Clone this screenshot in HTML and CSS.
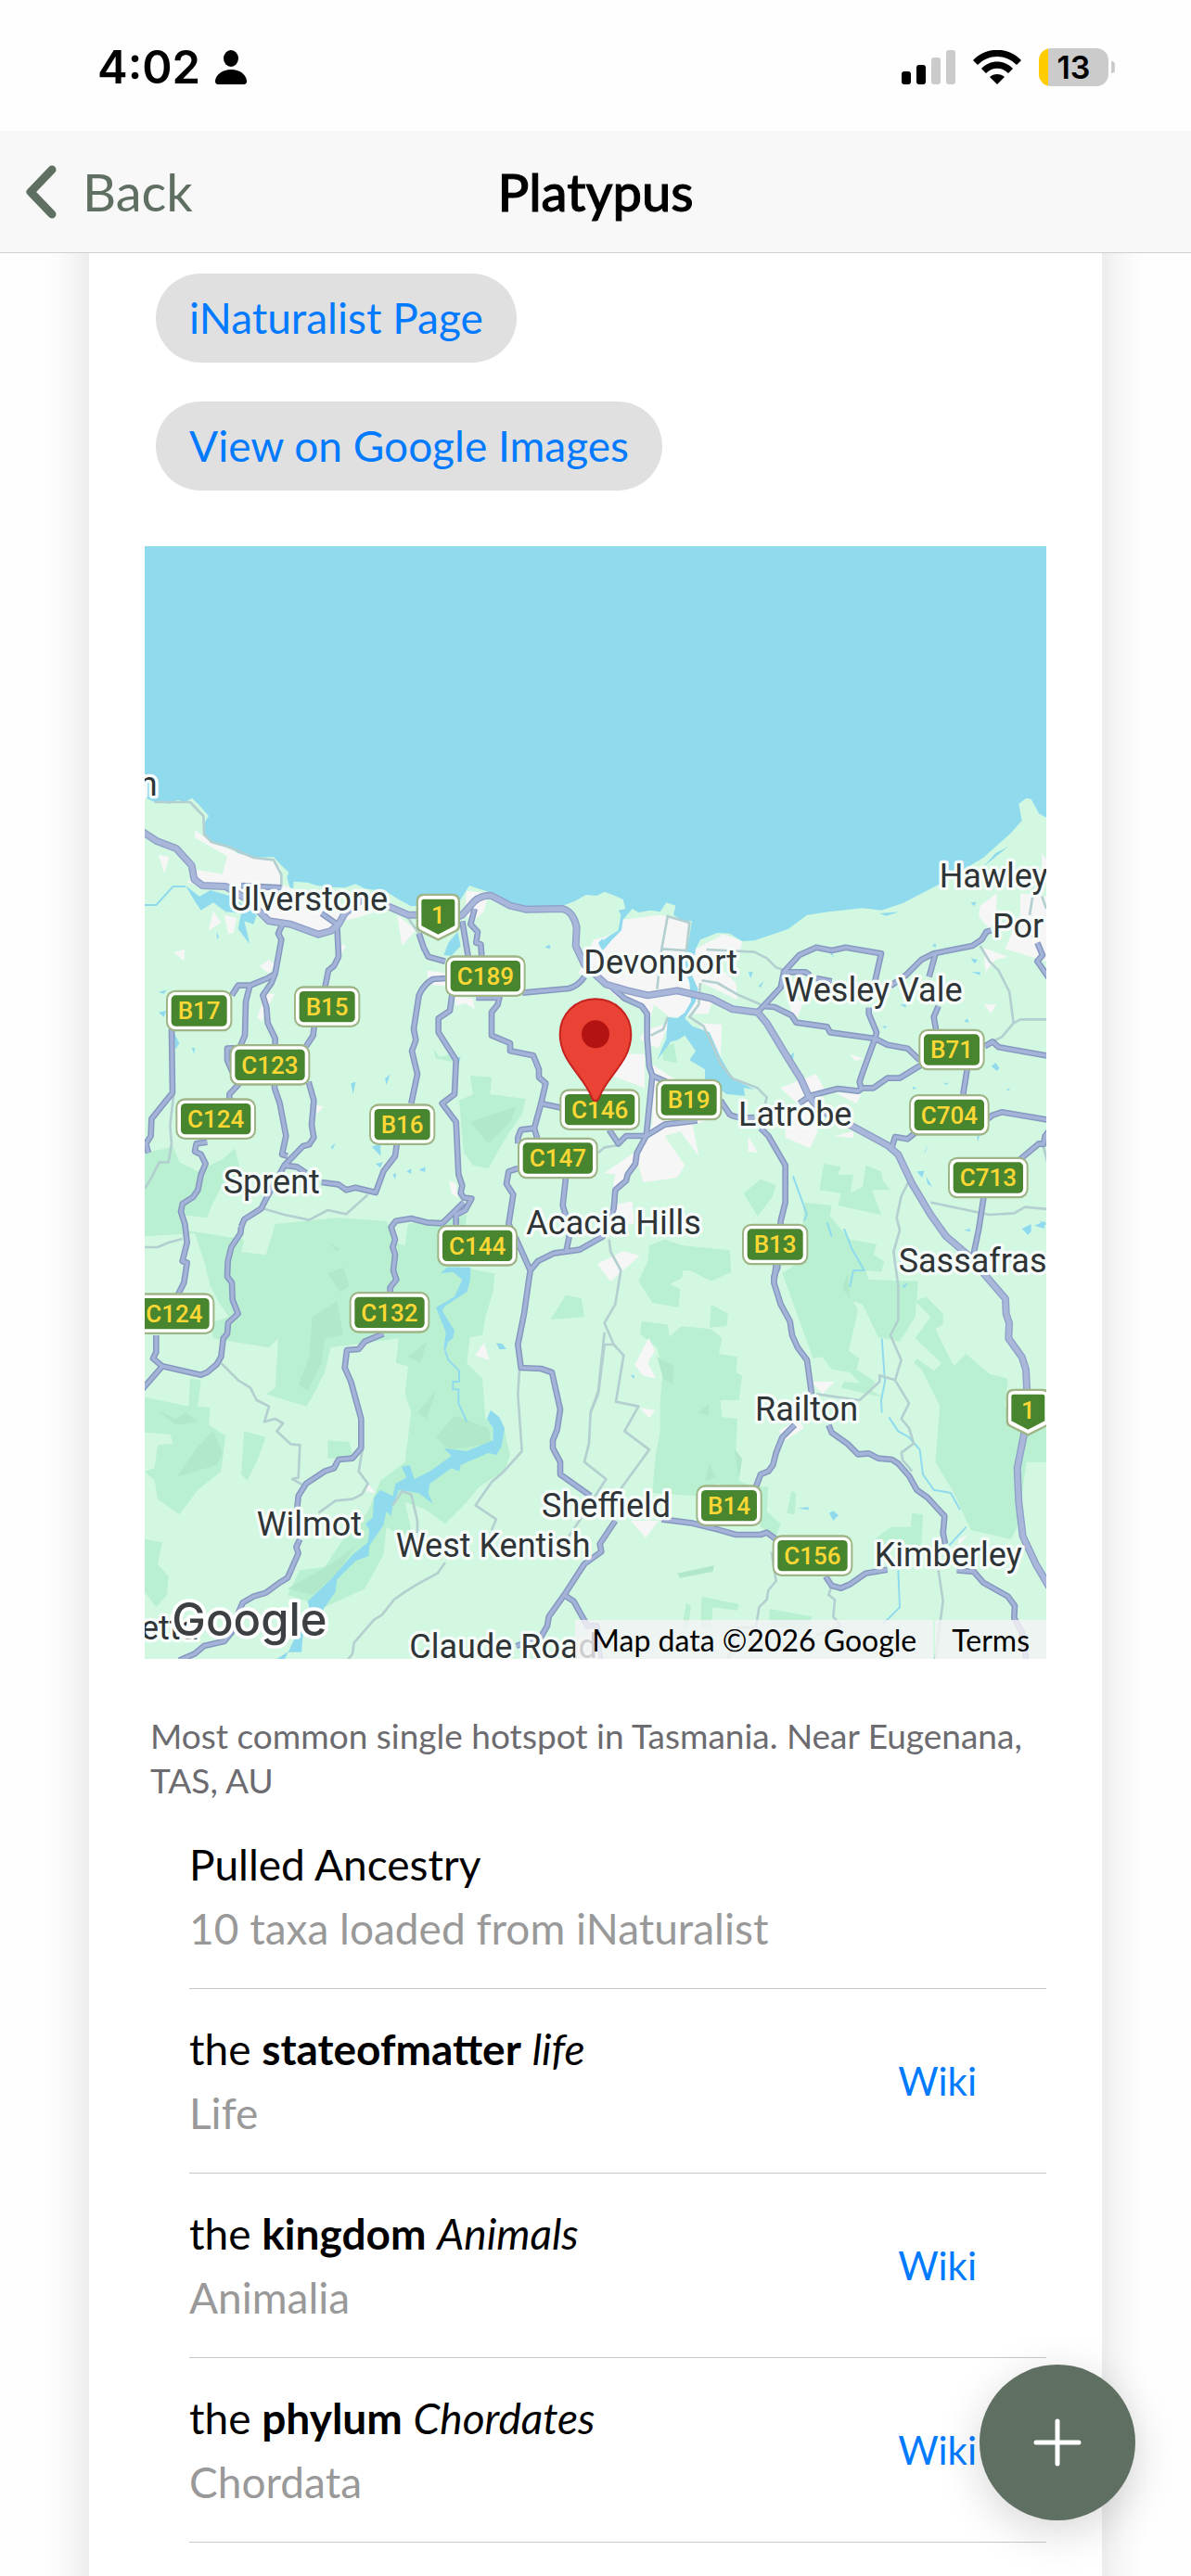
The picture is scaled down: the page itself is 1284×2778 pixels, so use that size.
FILE: index.html
```html
<!DOCTYPE html>
<html lang="en">
<head>
    <meta charset="UTF-8">
    <meta name="viewport" content="width=device-width, initial-scale=1.0">
    <title>Platypus</title>
    <link rel="stylesheet" href="styles.css">
</head>
<body>
    <div class="status-bar">
        <div class="status-left">
            <span class="status-time">4:02</span>
            <svg class="icon-person" viewBox="0 0 34 37" aria-hidden="true">
                <ellipse cx="17" cy="9" rx="8" ry="9"/>
                <path d="M4 37C1 37 0 36 0 33C1 26 8 21 17 21S33 26 34 33C34 36 33 37 30 37Z"/>
            </svg>
        </div>
        <div class="status-right">
            <svg class="icon-signal" viewBox="0 0 58 37" aria-hidden="true">
                <rect x="0" y="23" width="10" height="14" rx="3"/>
                <rect x="16" y="16" width="10" height="21" rx="3"/>
                <rect class="dim" x="32" y="8" width="10" height="29" rx="3"/>
                <rect class="dim" x="48" y="0" width="10" height="37" rx="3"/>
            </svg>
            <svg class="icon-wifi" viewBox="0 0 52 37" aria-hidden="true">
                <path d="M0 11C14-4 38-4 52 11L47 16C35 4 17 4 5 16Z"/>
                <path d="M9 20C18 10 34 10 43 20L38 25C31 18 21 18 14 25Z"/>
                <path d="M18 29C22 25 30 25 34 29L26 37Z"/>
            </svg>
            <div class="battery">
                <span class="battery-body">13</span>
                <span class="battery-tip"></span>
            </div>
        </div>
    </div>

    <header class="nav-bar">
        <button class="back-button" type="button">
            <svg class="icon-back" viewBox="0 0 34 58" aria-hidden="true"><path d="M29 5L6 29L29 53"/></svg>
            <span>Back</span>
        </button>
        <h1 class="nav-title">Platypus</h1>
    </header>

    <main class="page">
        <article class="card">
            <div class="links">
                <a class="pill" href="#inaturalist">iNaturalist Page</a>
                <a class="pill" href="#images">View on Google Images</a>
            </div>

            <div class="map">
                <svg class="map-canvas" viewBox="18 -693 2916 3600" role="img" aria-label="Map of Eugenana, Tasmania">
                    <defs>
                        <g id="highways">
                            <path d="M10 230L55 260L120 285L170 340L178 385L205 405L280 408L350 450L420 520L490 530L580 563L620 552L645 530L665 495L720 450L800 470L870 500H910L1000 520L1045 500L1085 455Q1110 435 1140 438L1200 470L1250 482L1370 480Q1405 490 1415 540L1412 600L1440 660L1510 725L1580 745L1645 760L1740 745L1850 770L1920 805L2000 815L2030 850L2090 950L2140 1030L2165 1085L2200 1130L2300 1180L2420 1245L2455 1275L2500 1370L2560 1470L2610 1540L2680 1600L2740 1670L2802 1742L2804 1790L2814 1820L2812 1870L2855 1930L2868 1970L2875 2110L2862 2180L2840 2290L2845 2400L2858 2510L2900 2600L2944 2675"/>
                        </g>
                        <g id="roads">
                            <path d="M468 520L450 560L460 580L440 690L415 705L360 728H320L300 760M440 690L428 720L400 760L412 800L416 850L440 900L438 1060L455 1110L475 1215L462 1275L480 1280M358 730L345 780L342 890L325 930L285 932V970L320 1050L292 1080V1110M330 405L460 412M590 495L640 530L645 635L630 665L612 680L600 740L565 870L563 890L540 925M548 1040L565 1100L558 1180L565 1220L550 1243L530 1248L470 1310L410 1420L395 1450L340 1485L330 1510M470 1310L510 1315L540 1335M590 1365L645 1372L670 1390L700 1382L765 1398L790 1330L828 1280L835 1230"/>
                            <path d="M880 1110L900 1015L882 940L895 905L888 870L905 760Q920 725 950 708L990 705M905 560L920 605L935 635L990 650M1045 520L1065 640M1085 480L1072 530L1095 555L1090 590L1105 595L1108 635M1012 760L1005 810L968 835V880L1025 970L1020 1080L980 1110L1025 1170L1033 1340L1045 1375L1040 1400L1050 1415L1075 1418L1055 1455L1025 1470V1510M1050 1430L980 1498L930 1495L880 1482L830 1490L815 1510L828 1550L820 1575L828 1600L822 1650L832 1680L812 1705V1725M1090 768H1165L1160 790L1140 815V890L1200 915V940L1275 955L1293 1000V1025L1315 1045L1300 1110L1370 1125M1300 1110L1278 1190L1235 1195L1225 1220V1240M1278 1190L1288 1225M1240 752L1390 738Q1420 730 1440 700"/>
                            <path d="M1225 1320L1195 1330L1188 1370L1210 1405L1195 1500L1220 1550L1265 1650L1245 1790L1225 1890L1235 1965L1300 1968L1335 1980L1362 2100L1352 2165L1338 2200V2225L1362 2270V2310L1460 2380M1380 1350L1370 1440L1395 1520L1382 1585M1265 1650L1290 1620L1340 1595L1425 1583L1500 1540L1535 1450L1540 1390L1575 1360L1580 1340L1605 1305L1610 1270L1640 1215L1660 1020L1650 990L1643 900V820L1625 795L1570 770L1530 735M105 870L108 1075L40 1160L38 1215L22 1240L30 1270M220 1235L185 1240L180 1265L200 1275L215 1305L200 1340L190 1390L175 1412L140 1435L135 1460L148 1500L155 1560L140 1620L155 1625L145 1690L125 1730M330 1510L328 1530L298 1575L287 1620L285 1670L300 1690L302 1745L320 1790L288 1820L285 1855L272 1870L265 1930L250 1955L220 1980L200 1988L75 1960L45 1935L55 1915V1860M75 1960L10 2035"/>
                            <path d="M790 1855L730 1880L710 1905L672 1908L665 1965L685 2010L718 2130V2225L690 2258L645 2262L630 2290L600 2300L540 2340L515 2380L510 2430M520 2520L508 2545L515 2565L480 2645L455 2660L410 2693L370 2705L335 2725L320 2760L300 2820L275 2850L210 2865L180 2890L130 2912M1540 2460L1490 2535L1495 2560L1440 2600L1375 2700L1325 2770L1320 2800L1300 2835L1220 2865M1375 2700L1405 2720L1450 2800H1480L1490 2910"/>
                            <path transform="translate(1470 0)" d="M190 1020L235 1040M410 1100L440 1145Q460 1160 520 1155M170 1215H105L80 1240L50 1195M170 1215L230 1178L335 1165M530 815L605 735L615 685L665 630L720 605L770 615L815 605L930 625L910 715M615 685H685L700 695M720 705L770 715M545 795L585 798L640 825L655 848L755 862L765 880L910 900L950 920L1015 932L1055 970M890 800V820L915 880L910 900L870 1010L860 1040L865 1060M700 1085L790 1062L855 1070L870 1060L905 1060L950 1028H990L1060 985M960 730L1010 695L1060 645L1100 625L1225 600L1255 580L1270 555L1285 550M1105 628L1085 700M1115 795L1100 830L1108 875M1265 925L1290 910L1310 928L1480 958M1208 1000L1195 1080M1275 1160L1290 1148L1320 1138L1480 1165M965 1250L975 1218L1015 1225L1040 1205M1380 1290L1440 1240L1455 1242L1460 1215L1480 1190M1262 1410L1245 1520L1228 1600M540 1190L565 1215L620 1310V1430L605 1490L595 1640L583 1670V1690M1435 590L1452 630L1435 650L1480 715M700 1085L665 1110"/>
                            <path transform="translate(1470 1470)" d="M590 160L583 220L605 290L635 345L642 390L660 430L690 470L705 580M650 680L610 720L590 770L580 810L565 830L540 840L525 880M760 680L770 705L820 740L855 775L890 772L920 788L965 792L985 805L1020 845L1045 890L1080 915L1135 975L1130 1030L1137 1065M1175 1150L1230 1155L1260 1190L1340 1235L1362 1265L1360 1305L1385 1350L1400 1445M220 985L320 998L400 1018L460 1035H540L560 1028L590 1050M750 1170L770 1200L800 1208L830 1195L880 1160L950 1148"/>
                        </g>
                        <g id="route-c">
                            <rect class="route-edge" x="-130" y="-67" width="260" height="134" rx="30"/>
                            <rect class="route-rim" x="-124" y="-60" width="248" height="120" rx="24"/>
                            <rect class="route-plate" x="-113" y="-50" width="226" height="100" rx="14"/>
                        </g>
                        <g id="route-b">
                            <rect class="route-edge" x="-107" y="-67" width="214" height="134" rx="30"/>
                            <rect class="route-rim" x="-101" y="-60" width="202" height="120" rx="24"/>
                            <rect class="route-plate" x="-90" y="-50" width="180" height="100" rx="14"/>
                        </g>
                        <g id="route-1">
                            <path class="route-edge" d="M-46-74H46Q71-74 71-50V34Q71 42 60 49L0 79L-60 49Q-71 42-71 34V-50Q-71-74-46-74Z"/>
                            <path class="route-rim" d="M-44-67H44Q64-67 64-48V30Q64 38 56 43L0 71L-56 43Q-64 38-64 30V-48Q-64-67-44-67Z"/>
                            <path class="route-plate" d="M-47-56H47Q54-56 54-48V30L0 58L-54 30V-48Q-54-56-47-56Z"/>
                        </g>
                    </defs>

                    <rect class="land" x="18" y="-693" width="2916" height="3600"/>

                    <!-- forest -->
                    <g class="forest">
                        <path d="M18 1270L110 1250L130 1300L190 1330L270 1290L310 1255L330 1340L270 1370L235 1440L220 1480L130 1470L18 1500Z"/>
                        <path d="M18 1470L130 1470L150 1520L340 1550L330 1590L410 1600L440 1500L640 1480L800 1490L830 1560L860 1570L870 1500L1060 1470L1040 1640L1150 1660L1145 1720L1120 1800L1110 1860L1070 1865L1060 1950L1110 2000L1120 2130L1180 2160L1200 2250L1180 2300L1100 2350L1060 2400L990 2470L920 2420L860 2400L880 2490L850 2510L800 2480L790 2570L730 2680L600 2740L480 2700L520 2620L600 2610L660 2520L740 2430L780 2330L860 2270L880 2110L860 2050L870 1960L830 1950L840 1870L620 1900L600 1980L560 2060L540 2090L410 2050L440 2030L450 1870L420 1900L240 1870L230 1820L290 1800L255 1750L230 1700L210 1620L180 1530L18 1540Z"/>
                        <path d="M18 2060L160 2090L165 2000L200 2005L190 2090L230 2095L225 2150L280 2185L265 2300L190 2360L130 2440L60 2390L50 2330L18 2300L50 2290L60 2215L110 2210L100 2180L18 2175ZM340 2170L410 2190L380 2270L350 2330L330 2310L335 2240ZM610 2200L680 2205L690 2250L610 2260Z"/>
                        <path d="M18 2520L75 2530L60 2600L95 2640L90 2700L55 2740L18 2690ZM1070 1020L1140 1025L1135 1080L1250 1095L1240 1140L1180 1230L1130 1320L1080 1310L1050 1270L1035 1100L1080 1080ZM1380 1730L1430 1740L1440 1800L1330 1810ZM950 930L970 960L1010 950L1015 975L960 965Z"/>
                        <path transform="translate(1470 0)" d="M220 930L260 915L270 980L225 970ZM745 1305L800 1315L790 1340L840 1340L830 1400L870 1380L880 1310L930 1330L935 1360L960 1390L900 1390L930 1470L790 1440L800 1400L730 1390ZM485 1400L540 1355L590 1375L580 1410L530 1475ZM680 1430L770 1440L760 1500L680 1490Z"/>
                        <path transform="translate(1470 1470)" d="M180 100L230 80L290 100L440 115L445 185L380 215L310 180L290 180L285 205L245 225L280 240L275 300L190 285L145 215L175 150ZM380 290L435 320L430 360L375 365ZM155 345L240 355L245 395L285 360L380 370L415 400L405 450L465 460L460 510L480 520L470 600L410 600L415 655L465 660L460 760L480 790L470 860L520 880L565 880L560 960L605 1000L590 1040L540 1010L520 900L400 870L330 910L190 900L200 780L215 700L215 600L225 500L205 430L150 385Z"/>
                        <path transform="translate(1470 1470)" d="M680 -20L760 0L830 80L915 95L905 130L940 150L930 185L880 180L890 210L1050 215L1040 330L990 410L920 395L870 290L840 280L855 310L825 440L860 465L850 500L910 540L900 570L935 590L800 560L810 540L860 545L830 510L770 500L740 460L710 465L610 190L670 150ZM1040 280L1075 265L1130 320V355L1105 370L1165 490L1205 450L1280 515L1340 530L1330 620L1464 690V800L1400 800L1370 1010L1350 1050L1220 1020L1160 890L1105 800L1120 620L1060 500L1035 480L1045 465L1100 505L1125 480L1040 400L1090 330ZM640 895L655 900L650 970L625 965ZM910 1050L960 1010L1025 1010L1030 965L1065 970L1060 1070L920 1080ZM350 1235L470 1260L465 1280L385 1270L380 1340L345 1335ZM300 1255L315 1265L305 1340L285 1340ZM570 1275L705 1300L690 1350L565 1330Z"/>
                    </g>
                    <g class="forest-dark">
                        <path d="M560 1800L640 1750L660 1860L600 1870L590 1950L545 2040L515 2020L550 1930ZM615 1560L650 1580L640 1590ZM870 1930L930 1880L910 1950ZM960 2190L1020 2120L1130 2160L1140 2210L1000 2230ZM120 2320L190 2220L240 2170L270 2240L250 2280L180 2300ZM55 2100L120 2130L150 2110L190 2140L120 2150ZM480 2680L620 2600L700 2540L640 2630L560 2700ZM1070 1170L1220 1120L1200 1170L1130 1240ZM900 2110L960 2040L930 2130ZM610 1660L660 1640L680 1700L650 1720Z"/>
                        <path transform="translate(1470 1470)" d="M205 460L260 490L255 550L225 530ZM340 640L375 610L370 650ZM360 860L375 805L395 850ZM455 760L480 790L470 850ZM270 1160L390 1135L385 1155L280 1175ZM820 190L830 270L805 240Z"/>
                    </g>

                    <!-- built-up areas -->
                    <g class="urban">
                        <path d="M180 225L230 262L320 300L370 315L435 318L458 350L460 400L495 415L640 470L760 440L830 470L700 510L640 525L600 555L480 530L400 510L290 420L155 395L190 355L270 368L285 310L180 250ZM62 305L98 312L82 365ZM240 488L265 525L225 550ZM275 500L315 510L305 560H288ZM112 620L148 612L145 650ZM390 665L420 645L440 660L420 690ZM835 500L895 550L850 600ZM1058 422L1130 430L1115 490L1080 520L1055 500ZM932 680L1010 690L990 730L935 725ZM1020 765L1080 770L1085 805L1055 785L1025 795ZM655 595L670 600L655 625ZM410 755L440 755L420 790L395 845L382 830ZM1002 1360L1025 1370L1030 1415L1010 1400ZM570 1115L597 1120L575 1145ZM1115 1885L1133 1940L1087 1925ZM740 2340L765 2370L735 2365Z"/>
                        <path transform="translate(1470 0)" d="M-50 690L0 580L80 560L95 515L215 500L240 505L310 525L300 600L330 610L420 562L480 585L470 640L380 640L460 720L465 775L350 720L345 790L300 830L245 830L195 790L175 870L245 850L210 930L175 920L150 900L170 870V800L80 770L0 700ZM345 770L385 780L370 820L320 820ZM340 850L415 855L410 960L360 890ZM80 950L165 950V1060L60 1020ZM0 870L50 780L80 840L60 920L20 960ZM190 985L260 1030L300 1050L410 1150L320 1180L340 1280L280 1200L230 1215L295 1310L270 1350L160 1365L145 1310L60 1400L70 1340L35 1335L130 1270L190 1180ZM603 1060L720 1015L750 1070L690 1120L725 1200L700 1255L620 1220V1170L660 1110ZM1250 470L1305 430L1300 520L1280 545L1245 505ZM1380 430L1464 440V650L1330 610L1380 500ZM1450 300L1464 320V350L1450 340ZM1260 605L1340 635L1300 645L1268 685ZM1262 790H1302L1285 820ZM630 770L680 780L660 830L640 815ZM830 950L875 965L845 972ZM500 1215L530 1270L500 1265ZM780 1075L865 1080L850 1110ZM780 1215L840 1200V1222ZM60 1440L125 1425L130 1500H70Z"/>
                        <path transform="translate(1470 1470)" d="M12 160L95 118L150 132L55 215ZM178 398L198 440L175 480L202 530L158 520L133 485ZM705 540L780 540L740 580ZM150 625L198 632L180 658ZM600 700L660 660L680 690L620 730ZM120 990L210 990L168 1045ZM1180 1050L1210 1035L1180 1070ZM110 0L130 -10V30Z"/>
                    </g>

                    <!-- sea, rivers and lakes -->
                    <g class="water">
                        <path d="M18 120L50 135L100 140L125 128L150 135L170 122L190 140L225 180L212 200L210 240L235 262L290 278L320 300L370 315L435 312L460 340L484 362L478 380L488 412L498 415L500 392L545 395L575 405L620 410L665 412L700 400L730 415L800 425L840 450L880 472L905 470L1040 450L1068 405L1130 425L1160 435L1200 460L1250 475L1370 470L1410 455L1445 435L1480 438L1505 425L1545 440L1565 450L1573 480L1550 485L1558 500L1550 550L1510 575L1490 590L1500 615L1530 580L1560 550L1565 515L1595 480L1615 492L1655 485L1685 490L1705 460L1735 470L1728 500L1760 520H1788L1775 600L1765 620L1770 690L1780 720L1785 780L1765 815L1740 835L1710 830L1705 900L1675 970L1720 910L1740 905L1765 890L1800 940L1780 970L1830 1000V1030L1900 1080L1960 1085L1955 1060L1990 1065L1920 1030L1880 960L1845 880L1790 860L1765 835L1800 780L1808 740L1790 700L1800 610L1805 600L1815 580L1870 558L1910 560L1950 585L1990 583L2100 545L2160 500L2230 490L2340 478L2400 485L2470 462L2580 405L2680 345L2730 315L2820 235L2855 195L2845 140L2870 122L2885 125L2910 172L2934 185V-693H18Z"/>
                        <path d="M150 405L195 440L230 420L300 440L380 500L370 530L340 520L350 560L358 595L320 545L330 495L280 490L240 460L200 485L180 455ZM985 630L1000 590L1030 555L1040 600L1010 632ZM1485 590L1500 575V620ZM63 750L90 742L80 755ZM63 815L88 810L80 830ZM250 555L258 570L252 580ZM112 880L130 915L118 935ZM170 930L180 930L178 950ZM1028 960L1040 960L1032 990ZM685 1045L700 1040L692 1080ZM795 1030L812 1015L800 1050ZM752 1250L780 1240L782 1280ZM765 1305L788 1300L780 1318ZM865 1330L880 1320V1338ZM905 1325L925 1315V1332ZM820 1340L832 1335L828 1355ZM1312 605L1328 595L1330 610ZM620 1250L635 1238L625 1260ZM1155 1885L1175 1888L1188 1905L1165 1905Z"/>
                        <path d="M975 1660L995 1640H1072L1070 1685L1060 1720L990 1765L980 1780L1020 1845L1015 1870L1000 1880L990 1910L985 1905L992 1850L960 1770L1020 1735L1045 1680L1015 1655ZM1125 2130L1137 2102L1165 2125L1182 2160L1172 2220L1155 2248L1130 2240L1040 2280L1035 2300L1010 2290L940 2340L935 2370L950 2405L930 2390L905 2370L840 2360L820 2410L815 2445L800 2430L790 2475L745 2540L742 2575L700 2590L640 2650L635 2690L600 2740L575 2780L530 2830L525 2885L480 2885L440 2910H470L550 2740L545 2720L620 2650L690 2570L740 2530L745 2490L732 2470L755 2450L760 2385L780 2360L820 2380L830 2340L865 2320L848 2285L875 2280L890 2325L940 2300L1010 2250L985 2225L1060 2235L1145 2200L1145 2160Z"/>
                        <path transform="translate(1470 0)" d="M1260 345L1300 300L1340 280L1290 320ZM925 495L990 490L945 503ZM500 685L515 685L508 705ZM533 730L550 715L540 735ZM770 620L778 640L765 625ZM1220 460L1238 458L1230 472ZM1095 600L1105 590L1108 605ZM1220 640L1242 645L1232 658ZM1222 685L1250 685V695ZM990 790L1010 790V800ZM1198 845L1208 835L1215 848ZM935 858L950 862L940 868ZM635 955L648 945L645 970ZM1286 990L1300 978L1312 995L1305 1005ZM1130 1043H1148L1140 1050ZM1335 1065L1348 1060L1340 1070ZM1045 1330L1070 1328L1062 1350ZM1075 1345L1095 1380L1080 1370ZM1240 1215H1248L1242 1235ZM1068 1270L1085 1240L1072 1268ZM1030 1055L1045 1060L1035 1065ZM1440 1490L1462 1495V1505Z"/>
                        <path transform="translate(1470 1470)" d="M762 965L775 958L792 972L775 990ZM660 950L695 945V955ZM1385 45L1415 30V55L1405 65ZM1425 35L1458 22V45ZM1198 50L1215 45L1220 55ZM998 230L1018 220L1005 238ZM120 520L132 518L130 530Z"/>
                    </g>
                    <g class="creek">
                        <path d="M18 468H55L110 408H150M990 1910L1000 1940L1035 1975V2010H1015V2035H1033V2080L1060 2140"/>
                        <path transform="translate(1470 1470)" d="M645 -125L690 0L680 20M755 25L770 70M810 45L835 110L875 180H840L828 235M932 400L942 540L930 600L932 640M955 655L985 700L1020 720L1055 760L1065 840L1100 890L1155 900L1185 955M1205 1010L1150 1070M985 1150L990 1270L935 1325"/>
                    </g>

                    <g class="minor-roads">
                        <path d="M50 135L165 135L208 180L210 240L235 265L290 280L370 315L435 322L460 370V410M112 1080L100 1180L105 1240L95 1300L65 1300L40 1350L18 1385M400 1450L470 1470L550 1487L610 1455L670 1468L740 1405M18 1575H60L95 1560L140 1548M870 510L905 560"/>
                        <path d="M265 1950L320 2005L360 2030L380 2070L420 2090L405 2140L440 2130L465 2145L445 2170L490 2212L520 2215L515 2320L495 2325L540 2350M722 2230L710 2300L740 2340L720 2375L690 2390L635 2395L580 2435M1230 1970L1225 2050L1238 2235L1180 2300L1140 2335L1088 2410L1155 2455L1140 2490M990 2595L965 2630L900 2665L860 2690L825 2715L785 2765L760 2780L695 2855L690 2890L675 2910M820 2410L850 2365L880 2375L900 2460V2500M1505 1850L1485 2040L1460 2110L1455 2210L1440 2270L1510 2325L1430 2450L1390 2510"/>
                        <path transform="translate(1470 0)" d="M365 612L520 620L560 640L590 670L620 680M350 712L400 720L470 760L540 790M240 500L220 610L300 615L310 525L240 505M220 610L205 740M345 720L340 790L310 830L355 860L380 910L410 980L450 1030L530 1060L560 1090L555 1110M240 830L225 870L185 890M1250 600L1280 650L1310 680L1345 750L1358 850L1320 895L1280 915M1358 850L1380 838H1470M1020 1360L995 1410L980 1480L990 1520L970 1590L985 1700V1810L960 1860L995 1940L975 2005L925 1990V2010L860 2070L720 2050M975 2005L1020 2080L995 2130L1020 2160L1035 2210L995 2240L1000 2265L1030 2300M1090 1430L1280 1470L1360 1465L1395 1445L1470 1452M15 1270L35 1252L80 1245M1420 440L1410 500M1450 440L1464 480M1455 1250L1470 1310"/>
                        <path transform="translate(1470 1470)" d="M50 80L55 120L88 180L70 290L35 350L65 420L97 455L72 605L145 620L100 700L180 760L85 890M65 420H35L15 580L-10 640M575 1090L590 1185L565 1215L560 1245L535 1270L525 1335H465L435 1437M770 1200L760 1230L780 1245L775 1300L800 1330L720 1360M1115 1150L1130 1250L1105 1437"/>
                    </g>

                    <use href="#roads" class="road-casing"/>
                    <use href="#highways" class="highway-casing"/>
                    <use href="#roads" class="road-fill"/>
                    <use href="#highways" class="highway-fill"/>

                    <g class="places">
                        <text x="59" y="115" text-anchor="end">n</text>
                        <text x="294" y="487">Ulverstone</text>
                        <text x="1438" y="690">Devonport</text>
                        <text x="272" y="1402">Sprent</text>
                        <text x="2086" y="780">Wesley Vale</text>
                        <text x="2588" y="410">Hawley</text>
                        <text x="2760" y="572">Por</text>
                        <text x="1938" y="1182">Latrobe</text>
                        <text x="1252" y="1532">Acacia Hills</text>
                        <text x="2456" y="1655">Sassafras</text>
                        <text x="1992" y="2135">Railton</text>
                        <text x="1302" y="2448">Sheffield</text>
                        <text x="2378" y="2608">Kimberley</text>
                        <text x="380" y="2508">Wilmot</text>
                        <text x="830" y="2578">West Kentish</text>
                        <text x="874" y="2905">Claude Road</text>
                        <text x="6" y="2845">etta</text>
                    </g>

                    <g class="routes">
                        <g transform="translate(194 810)"><use href="#route-b"/><text y="28">B17</text></g>
                        <g transform="translate(608 797)"><use href="#route-b"/><text y="28">B15</text></g>
                        <g transform="translate(851 1178)"><use href="#route-b"/><text y="28">B16</text></g>
                        <g transform="translate(1778 1098)"><use href="#route-b"/><text y="28">B19</text></g>
                        <g transform="translate(2628 936)"><use href="#route-b"/><text y="28">B71</text></g>
                        <g transform="translate(2057 1566)"><use href="#route-b"/><text y="28">B13</text></g>
                        <g transform="translate(1908 2411)"><use href="#route-b"/><text y="28">B14</text></g>
                        <g transform="translate(1120 698)"><use href="#route-c"/><text y="28">C189</text></g>
                        <g transform="translate(423 985)"><use href="#route-c"/><text y="28">C123</text></g>
                        <g transform="translate(248 1160)"><use href="#route-c"/><text y="28">C124</text></g>
                        <g transform="translate(1490 1130)"><use href="#route-c"/><text y="28">C146</text></g>
                        <g transform="translate(1354 1287)"><use href="#route-c"/><text y="28">C147</text></g>
                        <g transform="translate(2620 1147)"><use href="#route-c"/><text y="28">C704</text></g>
                        <g transform="translate(2746 1350)"><use href="#route-c"/><text y="28">C713</text></g>
                        <g transform="translate(1094 1570)"><use href="#route-c"/><text y="28">C144</text></g>
                        <g transform="translate(114 1790)"><use href="#route-c"/><text y="28">C124</text></g>
                        <g transform="translate(810 1786)"><use href="#route-c"/><text y="28">C132</text></g>
                        <g transform="translate(2178 2573)"><use href="#route-c"/><text y="28">C156</text></g>
                        <g transform="translate(967 505)"><use href="#route-1"/><text y="22">1</text></g>
                        <g transform="translate(2875 2107)"><use href="#route-1"/><text y="22">1</text></g>
                    </g>

                    <g class="pin">
                        <path d="M1476 772C1411 772 1361 822 1361 886C1361 975 1438 1020 1464 1090Q1468 1102 1476 1102T1488 1090C1514 1020 1591 975 1591 886C1591 822 1541 772 1476 772Z"/>
                        <circle cx="1476" cy="886" r="45"/>
                    </g>

                    <text class="map-logo" x="106" y="2832">Google</text>
                </svg>
                <div class="map-credits">
                    <span class="credit">Map data ©2026 Google</span>
                    <a class="credit" href="#terms">Terms</a>
                </div>
            </div>

            <p class="caption">Most common single hotspot in Tasmania. Near Eugenana, TAS, AU</p>

            <ul class="taxa">
                <li class="taxon">
                    <div class="taxon-text">
                        <div class="taxon-name">Pulled Ancestry</div>
                        <div class="taxon-latin">10 taxa loaded from iNaturalist</div>
                    </div>
                </li>
                <li class="taxon">
                    <div class="taxon-text">
                        <div class="taxon-name">the <b>stateofmatter</b> <i>life</i></div>
                        <div class="taxon-latin">Life</div>
                    </div>
                    <a class="wiki" href="#life">Wiki</a>
                </li>
                <li class="taxon">
                    <div class="taxon-text">
                        <div class="taxon-name">the <b>kingdom</b> <i>Animals</i></div>
                        <div class="taxon-latin">Animalia</div>
                    </div>
                    <a class="wiki" href="#animalia">Wiki</a>
                </li>
                <li class="taxon">
                    <div class="taxon-text">
                        <div class="taxon-name">the <b>phylum</b> <i>Chordates</i></div>
                        <div class="taxon-latin">Chordata</div>
                    </div>
                    <a class="wiki" href="#chordata">Wiki</a>
                </li>
            </ul>
        </article>
    </main>

    <button class="fab" type="button" aria-label="Add">
        <svg class="icon-plus" viewBox="0 0 52 52" aria-hidden="true"><path d="M26 3V49M3 26H49"/></svg>
    </button>
</body>
</html>
```

FILE: styles.css
```css
* {
    box-sizing: border-box;
}

body {
    margin: 0;
    min-height: 100vh;
    display: flex;
    flex-direction: column;
    background: #fefefe;
    color: #000;
    font-family: Lato, sans-serif;
    font-size: 46px;
}

button {
    font-family: inherit;
    border: none;
    padding: 0;
    cursor: pointer;
}

a {
    color: #007aff;
    text-decoration: none;
}

/* Status bar */
.status-bar {
    height: 141px;
    padding: 0 82px 0 105px;
    display: flex;
    align-items: center;
    justify-content: space-between;
    font-family: Inter, sans-serif;
    font-weight: 600;
}

.status-left,
.status-right,
.battery {
    display: flex;
    align-items: center;
}

.status-left {
    gap: 16px;
    padding-top: 4px;
}

.status-right {
    gap: 19px;
    padding-top: 4px;
}

.status-time {
    font-size: 49px;
    line-height: 60px;
}

.icon-person {
    width: 34px;
    height: 37px;
}

.icon-signal {
    width: 58px;
    height: 37px;
}

.icon-signal .dim {
    fill: #cbcbcb;
}

.icon-wifi {
    width: 52px;
    height: 37px;
}

.battery {
    gap: 3px;
}

.battery-body {
    width: 75px;
    height: 41px;
    border-radius: 13px;
    background: linear-gradient(to right, #ffcc00 10px, #cbcbcb 10px);
    font-size: 34px;
    line-height: 41px;
    text-align: center;
}

.battery-tip {
    width: 4px;
    height: 13px;
    border-radius: 0 4px 4px 0;
    background: #cbcbcb;
}

/* Navigation bar */
.nav-bar {
    position: relative;
    z-index: 1;
    height: 132px;
    display: grid;
    grid-template-columns: 1fr auto 1fr;
    align-items: center;
    padding: 0 27px;
    background: #f8f8f8;
    border-bottom: 1px solid #cfcfcf;
}

.back-button {
    display: flex;
    align-items: center;
    gap: 28px;
    justify-self: start;
    background: none;
    color: #5f6f61;
    font-size: 56px;
    line-height: 64px;
}

.icon-back {
    width: 34px;
    height: 58px;
    fill: none;
    stroke: #5f6f61;
    stroke-width: 9;
    stroke-linecap: round;
    stroke-linejoin: round;
}

.nav-title {
    margin: 0;
    font-size: 56px;
    font-weight: 500;
    line-height: 64px;
    -webkit-text-stroke: 1px #000;
}

/* Card */
.page {
    flex: 1;
    display: flex;
    overflow: hidden;
}

.card {
    flex: 1;
    min-width: 0;
    margin: -60px 96px;
    padding: 82px 60px 60px;
    background: #fff;
    box-shadow: 0 0 48px rgba(0, 0, 0, 0.14);
}

.links {
    display: flex;
    flex-direction: column;
    align-items: flex-start;
    gap: 42px;
    margin: 0 12px 60px;
}

.pill {
    padding: 20px 36px;
    border-radius: 48px;
    background: #e0e0e0;
    line-height: 56px;
}

/* Map */
.map {
    position: relative;
    overflow: hidden;
}

.map-canvas {
    display: block;
    width: 100%;
    height: auto;
    font-family: Roboto, sans-serif;
}

.land { fill: #d3f8e2; }
.forest { fill: #b9f0d1; }
.forest-dark { fill: #b1e8c9; }
.urban { fill: #f6f6f6; }
.water { fill: #90daee; }

.creek,
.minor-roads,
.road-casing,
.road-fill,
.highway-casing,
.highway-fill {
    fill: none;
    stroke-linejoin: round;
}

.creek {
    stroke: #90daee;
    stroke-width: 6;
}

.minor-roads {
    stroke: #b3cfcf;
    stroke-width: 8;
}

.road-casing {
    stroke: #8798c0;
    stroke-width: 20;
}

.road-fill {
    stroke: #a3b4d8;
    stroke-width: 11;
}

.highway-casing {
    stroke: #8f9fc7;
    stroke-width: 24;
}

.highway-fill {
    stroke: #a8b7da;
    stroke-width: 16;
}

.places text {
    fill: #2f3437;
    stroke: #f6fcf9;
    stroke-width: 20;
    stroke-linejoin: round;
    paint-order: stroke;
    font-size: 108px;
}

.routes text {
    fill: #fdd835;
    font-size: 78px;
    font-weight: 500;
    text-anchor: middle;
}

.route-edge { fill: #9fb587; }
.route-rim { fill: #fff; }
.route-plate { fill: #47862f; }

.pin path {
    fill: #ea4335;
    stroke: #c5221f;
    stroke-width: 6;
}

.pin circle {
    fill: #b31412;
}

.map-logo {
    fill: #3c4043;
    stroke: #fff;
    stroke-width: 22;
    stroke-linejoin: round;
    paint-order: stroke;
    font-family: Inter, sans-serif;
    font-size: 147px;
    font-weight: 500;
}

.map-credits {
    position: absolute;
    right: 0;
    bottom: 0;
    display: flex;
    gap: 2px;
}

.credit {
    padding: 2px 18px 0;
    background: rgba(245, 242, 245, 0.8);
    color: #000;
    font-size: 32px;
    line-height: 40px;
}

/* Caption and ancestry list */
.caption {
    margin: 59px 6px 2px;
    color: #6b6b70;
    font-size: 37px;
    line-height: 48px;
}

.taxa {
    margin: 0 0 0 48px;
    padding: 0;
    list-style: none;
}

.taxon {
    display: flex;
    align-items: center;
    justify-content: space-between;
    height: 199px;
    padding-right: 75px;
    border-bottom: 1px solid #c8c7cc;
}

.taxon-text {
    line-height: 69px;
}

.taxon-latin {
    color: #999;
}

.wiki {
    font-size: 42px;
}

/* Floating button */
.fab {
    position: fixed;
    right: 60px;
    bottom: 60px;
    z-index: 2;
    width: 168px;
    height: 168px;
    display: flex;
    align-items: center;
    justify-content: center;
    border-radius: 50%;
    background: #5f6f61;
    box-shadow: 0 12px 48px rgba(0, 0, 0, 0.16);
}

.icon-plus {
    width: 52px;
    height: 52px;
    stroke: #fff;
    stroke-width: 5;
    stroke-linecap: round;
}
```
